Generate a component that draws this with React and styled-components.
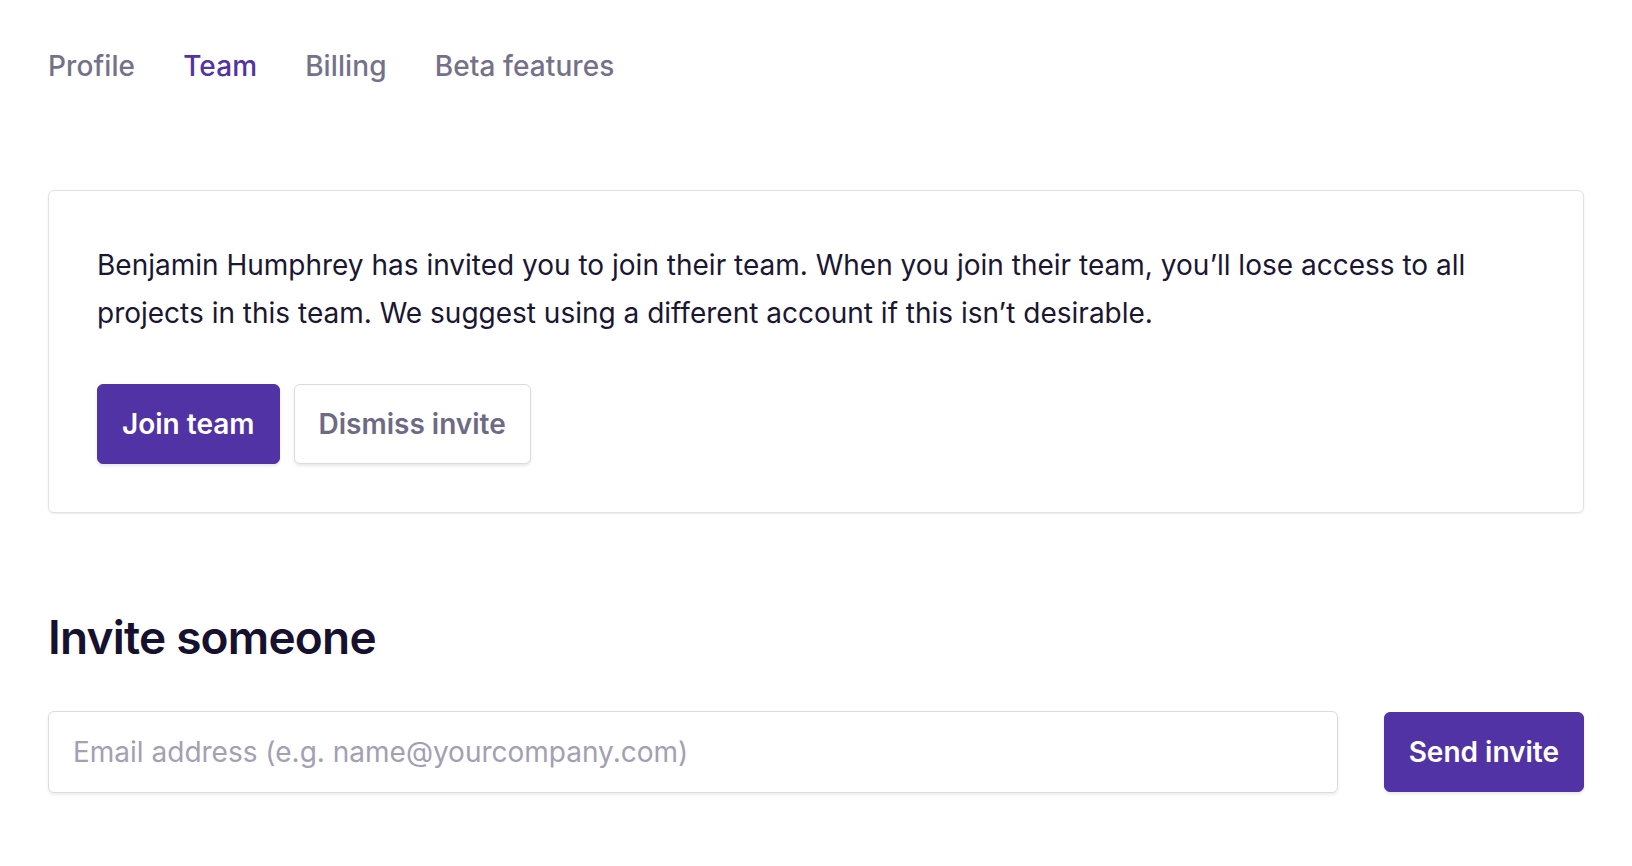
import styled, { createGlobalStyle } from 'styled-components';

const Global = createGlobalStyle`
  * { box-sizing: border-box; }
  body {
    margin: 0;
    background: #ffffff;
    font-family: Inter, "Noto Sans", "Liberation Sans", sans-serif;
    -webkit-font-smoothing: antialiased;
  }
`

const Page = styled.div`
  padding: 48px 48px;
`

const Tabs = styled.nav`
  display: flex;
  gap: 48px;
  height: 36px;
  align-items: center;
`

const Tab = styled.a`
  font-size: 28px;
  font-weight: 500;
  line-height: 36px;
  letter-spacing: 0.1px;
  color: ${p => (p.active ? '#5133a5' : '#75718a')};
  text-decoration: none;
  cursor: pointer;
`

const Card = styled.div`
  margin-top: 106px;
  border: 1px solid #e2e1e7;
  border-radius: 6px;
  box-shadow: 0 1px 2px rgba(30, 25, 60, 0.08);
  padding: 50px 48px 48px;
  p {
    margin: 0 0 47px;
    font-size: 28px;
    line-height: 48px;
    color: #1a1633;
  }
`

const Actions = styled.div`
  display: flex;
  gap: 14px;
`

const Button = styled.button`
  height: 80px;
  padding: 0 24px;
  border-radius: 6px;
  font-family: inherit;
  font-size: 28px;
  font-weight: 600;
  cursor: pointer;
  border: 1px solid ${p => (p.primary ? '#5133a5' : '#dcdbe2')};
  background: ${p => (p.primary ? '#5133a5' : '#ffffff')};
  color: ${p => (p.primary ? '#ffffff' : '#6e6a85')};
  box-shadow: 0 2px 3px rgba(30, 25, 60, 0.1);
`

const Heading = styled.h2`
  margin: 96px 0 46px;
  font-size: 46px;
  line-height: 56px;
  font-weight: 600;
  letter-spacing: -0.8px;
  color: #15112e;
`

const InviteRow = styled.div`
  display: flex;
  align-items: center;
  gap: 46px;
`

const EmailInput = styled.input`
  flex: 1;
  height: 82px;
  padding: 0 24px;
  border: 1px solid #dcdbe2;
  border-radius: 6px;
  font-family: inherit;
  font-size: 28px;
  color: #17132f;
  box-shadow: 0 2px 3px rgba(30, 25, 60, 0.08);
  outline: none;
  &::placeholder {
    color: #a3a0b3;
  }
`

export default function App() {
  return (
    <Page>
      <Global />
      <Tabs>
        <Tab>Profile</Tab>
        <Tab active>Team</Tab>
        <Tab>Billing</Tab>
        <Tab>Beta features</Tab>
      </Tabs>
      <Card>
        <p>
          Benjamin Humphrey has invited you to join their team. When you join their team, you’ll lose access to all
          projects in this team. We suggest using a different account if this isn’t desirable.
        </p>
        <Actions>
          <Button primary>Join team</Button>
          <Button>Dismiss invite</Button>
        </Actions>
      </Card>
      <Heading>Invite someone</Heading>
      <InviteRow>
        <EmailInput placeholder="Email address (e.g. name@yourcompany.com)" />
        <Button primary>Send invite</Button>
      </InviteRow>
    </Page>
  )
}
